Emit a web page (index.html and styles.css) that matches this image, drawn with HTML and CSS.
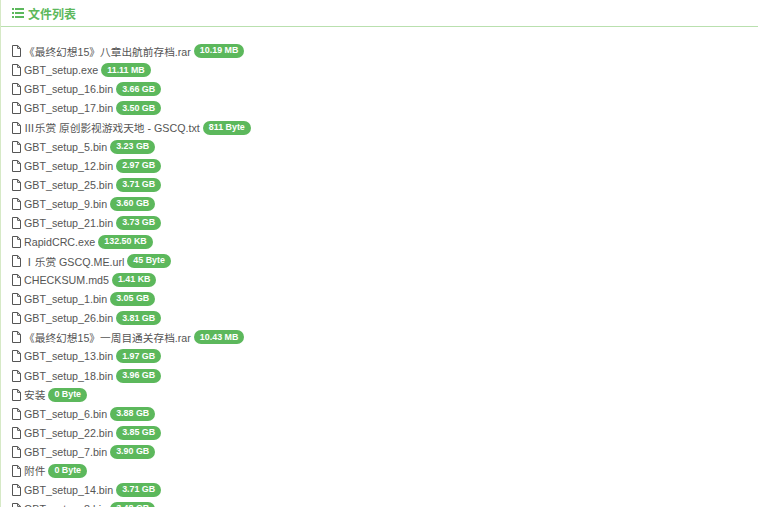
FILE: index.html
```html
<!DOCTYPE html>
<html lang="zh-CN">
  <head>
    <meta charset="UTF-8" />
    <title>文件列表</title>
    <link rel="stylesheet" href="styles.css">
  </head>
  <body>
    <svg class="sprite" width="0" height="0">
      <symbol id="file" viewBox="0 0 9 12">
        <path d="M.5 .5H5.6L8.5 3.4V11.5H.5Z M5.6 .5V3.4H8.5" fill="none" stroke="#555" stroke-width="1"/>
      </symbol>
    </svg>
    <div class="panel">
      <div class="panel-heading">
        <svg class="list-icon" viewBox="0 0 12 10" width="12" height="10">
          <path d="M0 0h2v2H0zM3 0h9v2H3zM0 4h2v2H0zM3 4h9v2H3zM0 8h2v2H0zM3 8h9v2H3z" fill="#5cb85c"/>
        </svg>
        <span>文件列表</span>
      </div>
      <ul class="file-list">
        <li><svg class="file"><use href="#file"/></svg>《最终幻想15》八章出航前存档.rar<span class="badge">10.19 MB</span></li>
        <li><svg class="file"><use href="#file"/></svg>GBT_setup.exe<span class="badge">11.11 MB</span></li>
        <li><svg class="file"><use href="#file"/></svg>GBT_setup_16.bin<span class="badge">3.66 GB</span></li>
        <li><svg class="file"><use href="#file"/></svg>GBT_setup_17.bin<span class="badge">3.50 GB</span></li>
        <li><svg class="file"><use href="#file"/></svg>Ⅲ乐赏 原创影视游戏天地 - GSCQ.txt<span class="badge">811 Byte</span></li>
        <li><svg class="file"><use href="#file"/></svg>GBT_setup_5.bin<span class="badge">3.23 GB</span></li>
        <li><svg class="file"><use href="#file"/></svg>GBT_setup_12.bin<span class="badge">2.97 GB</span></li>
        <li><svg class="file"><use href="#file"/></svg>GBT_setup_25.bin<span class="badge">3.71 GB</span></li>
        <li><svg class="file"><use href="#file"/></svg>GBT_setup_9.bin<span class="badge">3.60 GB</span></li>
        <li><svg class="file"><use href="#file"/></svg>GBT_setup_21.bin<span class="badge">3.73 GB</span></li>
        <li><svg class="file"><use href="#file"/></svg>RapidCRC.exe<span class="badge">132.50 KB</span></li>
        <li><svg class="file"><use href="#file"/></svg>Ⅰ乐赏 GSCQ.ME.url<span class="badge">45 Byte</span></li>
        <li><svg class="file"><use href="#file"/></svg>CHECKSUM.md5<span class="badge">1.41 KB</span></li>
        <li><svg class="file"><use href="#file"/></svg>GBT_setup_1.bin<span class="badge">3.05 GB</span></li>
        <li><svg class="file"><use href="#file"/></svg>GBT_setup_26.bin<span class="badge">3.81 GB</span></li>
        <li><svg class="file"><use href="#file"/></svg>《最终幻想15》一周目通关存档.rar<span class="badge">10.43 MB</span></li>
        <li><svg class="file"><use href="#file"/></svg>GBT_setup_13.bin<span class="badge">1.97 GB</span></li>
        <li><svg class="file"><use href="#file"/></svg>GBT_setup_18.bin<span class="badge">3.96 GB</span></li>
        <li><svg class="file"><use href="#file"/></svg>安装<span class="badge">0 Byte</span></li>
        <li><svg class="file"><use href="#file"/></svg>GBT_setup_6.bin<span class="badge">3.88 GB</span></li>
        <li><svg class="file"><use href="#file"/></svg>GBT_setup_22.bin<span class="badge">3.85 GB</span></li>
        <li><svg class="file"><use href="#file"/></svg>GBT_setup_7.bin<span class="badge">3.90 GB</span></li>
        <li><svg class="file"><use href="#file"/></svg>附件<span class="badge">0 Byte</span></li>
        <li><svg class="file"><use href="#file"/></svg>GBT_setup_14.bin<span class="badge">3.71 GB</span></li>
        <li><svg class="file"><use href="#file"/></svg>GBT_setup_8.bin<span class="badge">3.48 GB</span></li>
      </ul>
    </div>
  </body>
</html>
```

FILE: styles.css
```css
html, body {
  height: 100%;
  margin: 0;
  overflow: hidden;
}
body {
  background: #ffffff;
  color: #555555;
  font-family: "Liberation Sans", "Noto Sans CJK SC", sans-serif;
  font-size: 10.7px;
}
.sprite {
  position: absolute;
}
.panel {
  border-left: 1px solid #d6e9c6;
}
.panel-heading {
  display: flex;
  align-items: center;
  gap: 4px;
  height: 26px;
  padding-left: 11px;
  border-bottom: 1px solid #b9e0ae;
  color: #5cb85c;
  font-size: 12px;
  font-weight: bold;
}
.file-list {
  list-style: none;
  margin: 0;
  padding: 14.7px 0 0 11px;
}
.file-list li {
  display: flex;
  align-items: center;
  gap: 3px;
  height: 19.09px;
}
.file {
  width: 9px;
  height: 12px;
  flex: none;
}
.badge {
  padding: 2.25px 6px;
  border-radius: 7px;
  background: #5cb85c;
  color: #ffffff;
  font-size: 8.9px;
  font-weight: bold;
  line-height: 9.5px;
}
```
